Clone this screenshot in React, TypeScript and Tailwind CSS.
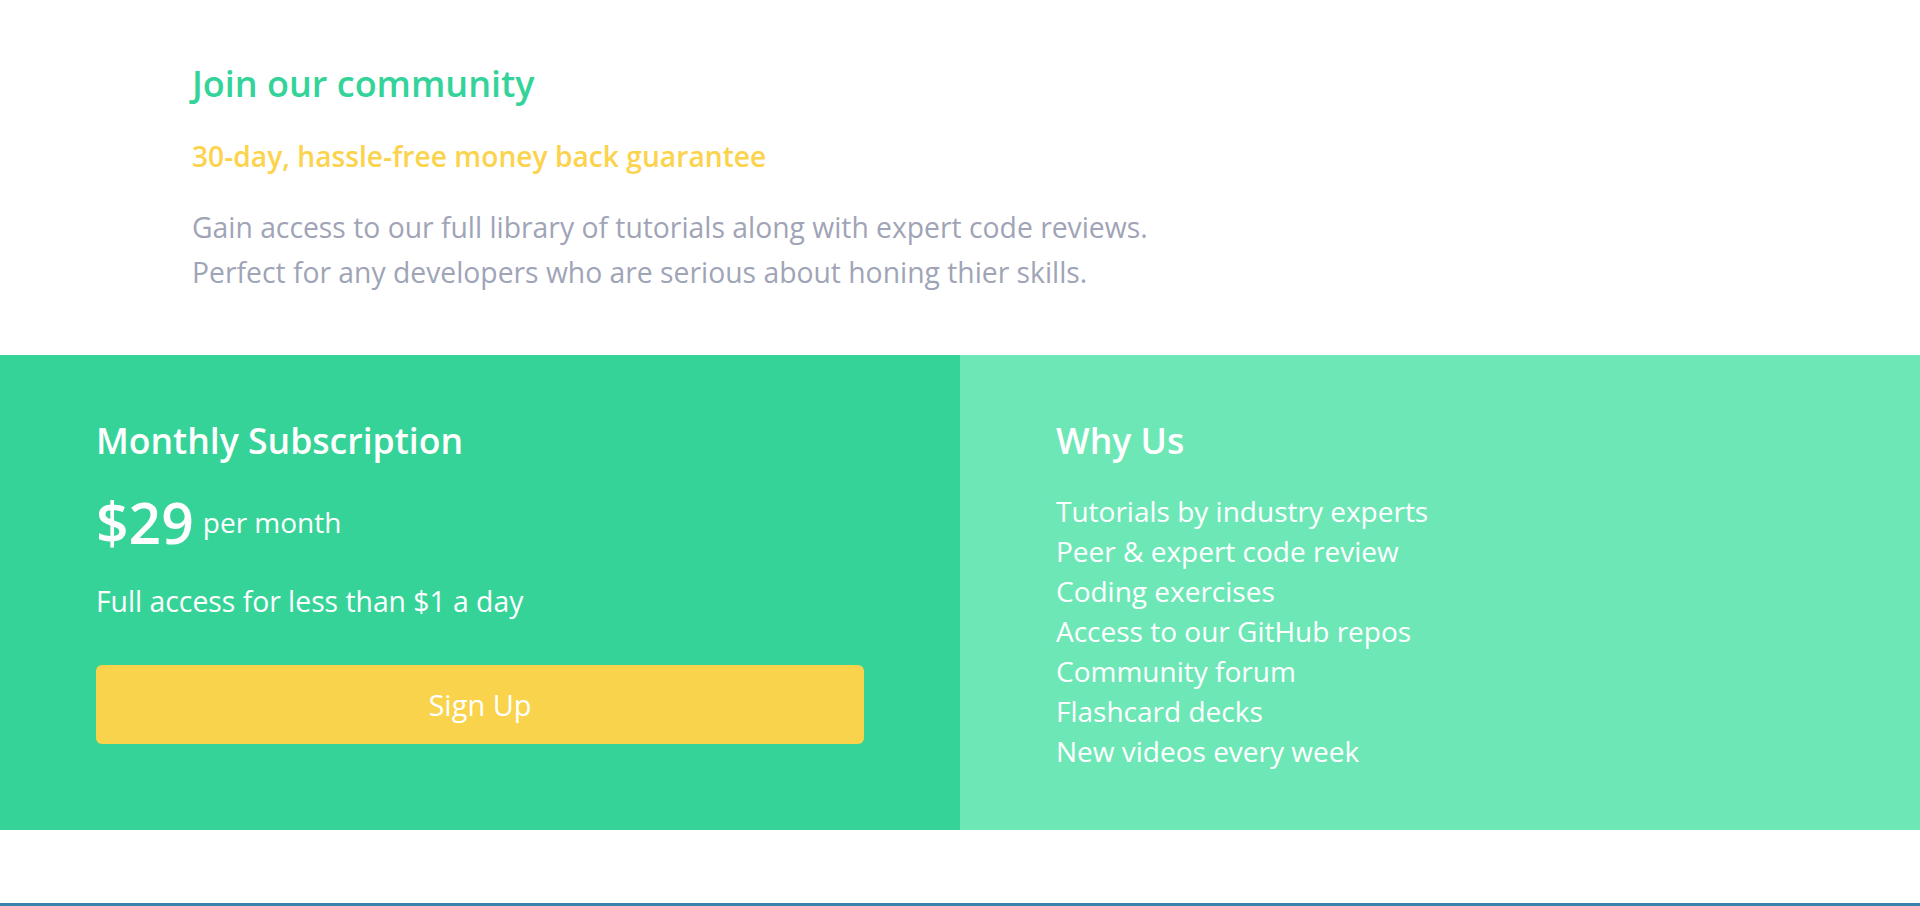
const perks = [
  "Tutorials by industry experts",
  "Peer & expert code review",
  "Coding exercises",
  "Access to our GitHub repos",
  "Community forum",
  "Flashcard decks",
  "New videos every week",
];

export default function App() {
  return (
    <div className="min-h-screen bg-white font-['Open_Sans',sans-serif] antialiased">
      <section className="pl-[192px] pt-[62px] pb-[60px]">
        <h2 className="text-[36px] leading-[44px] font-semibold text-[#34d399]">Join our community</h2>
        <h3 className="mt-[32px] text-[28.2px] leading-[36px] font-semibold text-[#fcd34d]">
          30-day, hassle-free money back guarantee
        </h3>
        <p className="mt-[31px] text-[28.3px] leading-[45px] text-[#9fa4b6]">
          Gain access to our full library of tutorials along with expert code reviews.
          <br />
          Perfect for any developers who are serious about honing thier skills.
        </p>
      </section>

      <section className="grid grid-cols-2 text-white">
        <div className="bg-[#36d399] px-[96px] pt-[63px] pb-[86px]">
          <h2 className="text-[35.6px] leading-[44px] font-semibold">Monthly Subscription</h2>
          <div className="mt-[30px] flex items-center gap-[9px]">
            <span className="text-[57px] leading-[60px] font-semibold">$29</span>
            <span className="text-[28px] leading-[36px]">per month</span>
          </div>
          <p className="mt-[31px] text-[28.3px] leading-[36px]">Full access for less than $1 a day</p>
          <button className="mt-[46px] flex h-[79px] w-full items-center justify-center rounded-md bg-[#f9d34c] text-[29px] text-white">
            Sign Up
          </button>
        </div>
        <div className="bg-[#6ee7b7] px-[96px] pt-[63px]">
          <h2 className="text-[35.6px] leading-[44px] font-semibold">Why Us</h2>
          <ul className="mt-[29px] text-[28px] leading-[40px]">
            {perks.map((p) => (
              <li key={p}>{p}</li>
            ))}
          </ul>
        </div>
      </section>

      <div className="h-[73px]" />
      <div className="h-[3px] bg-[#3883ab]" />
    </div>
  );
}
